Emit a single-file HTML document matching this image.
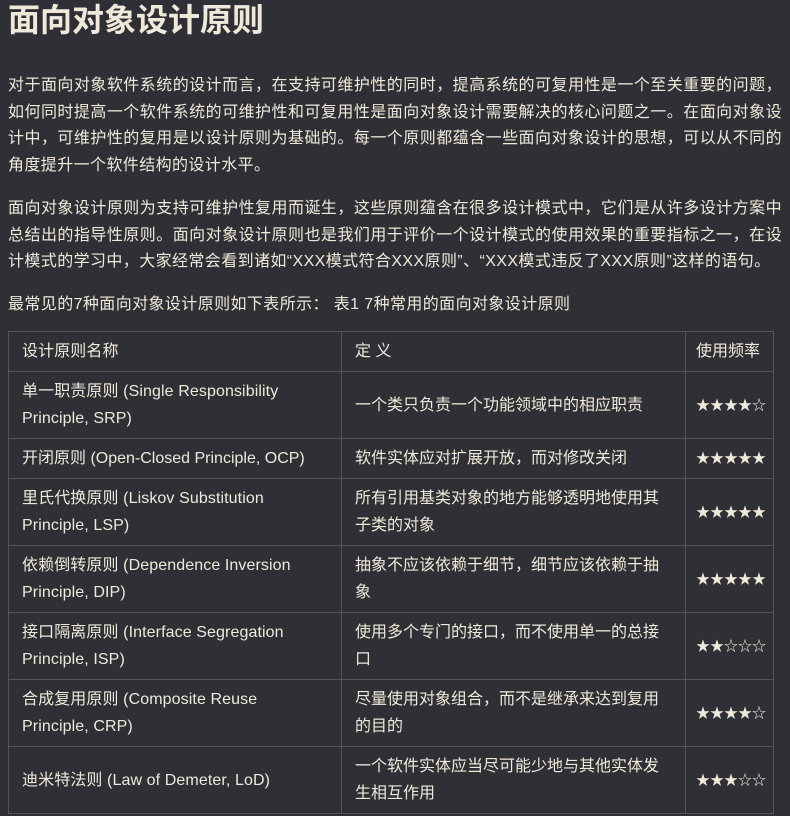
<!DOCTYPE html>
<html><head><meta charset="utf-8"><style>
html,body{margin:0;background:#2f3035;}
body{width:790px;height:816px;overflow:hidden;color:#efe9d9;font-family:"Liberation Sans","Noto Sans CJK SC",sans-serif;padding:0 8px;box-sizing:border-box;}
h1{font-size:32px;font-weight:bold;margin:0;padding-top:1px;line-height:38px;}
p{font-size:16px;line-height:26.5px;margin:0;text-align:justify;letter-spacing:0.4px;}
.p1{margin-top:34px;}
.p2{margin-top:17px;}
.p3{margin-top:16px;}
table{border-collapse:collapse;margin-top:13px;width:765px;font-size:16px;table-layout:fixed;}
td{border:1px solid #555;padding:0 13px;line-height:27px;vertical-align:middle;overflow:hidden;}
td.a{padding-right:40px;letter-spacing:0.1px;}
td.nw{padding-right:5px;white-space:nowrap;letter-spacing:0;}
tr.h td{height:39px;}
tr.s td{height:39px;}
tr.d td{height:66px;}
col.c1{width:333px;}col.c2{width:344px;}col.c3{width:88px;}
td.st{padding:0 10px;white-space:nowrap;font-size:14px;}
tr.h td.st{font-size:16px;}
</style></head><body>
<h1>面向对象设计原则</h1>
<p class="p1">对于面向对象软件系统的设计而言，在支持可维护性的同时，提高系统的可复用性是一个至关重要的问题，如何同时提高一个软件系统的可维护性和可复用性是面向对象设计需要解决的核心问题之一。在面向对象设计中，可维护性的复用是以设计原则为基础的。每一个原则都蕴含一些面向对象设计的思想，可以从不同的角度提升一个软件结构的设计水平。</p>
<p class="p2">面向对象设计原则为支持可维护性复用而诞生，这些原则蕴含在很多设计模式中，它们是从许多设计方案中总结出的指导性原则。面向对象设计原则也是我们用于评价一个设计模式的使用效果的重要指标之一，在设计模式的学习中，大家经常会看到诸如“XXX模式符合XXX原则”、“XXX模式违反了XXX原则”这样的语句。</p>
<p class="p3">最常见的7种面向对象设计原则如下表所示： 表1 7种常用的面向对象设计原则</p>
<table>
<colgroup><col class="c1"><col class="c2"><col class="c3"></colgroup>
<tr class="h"><td class="a">设计原则名称</td><td>定 义</td><td class="st">使用频率</td></tr>
<tr class="d"><td class="a">单一职责原则 (Single Responsibility Principle, SRP)</td><td>一个类只负责一个功能领域中的相应职责</td><td class="st">★★★★☆</td></tr>
<tr class="s"><td class="nw">开闭原则 (Open-Closed Principle, OCP)</td><td>软件实体应对扩展开放，而对修改关闭</td><td class="st">★★★★★</td></tr>
<tr class="d"><td class="a">里氏代换原则 (Liskov Substitution Principle, LSP)</td><td>所有引用基类对象的地方能够透明地使用其子类的对象</td><td class="st">★★★★★</td></tr>
<tr class="d"><td class="a">依赖倒转原则 (Dependence Inversion Principle, DIP)</td><td>抽象不应该依赖于细节，细节应该依赖于抽象</td><td class="st">★★★★★</td></tr>
<tr class="d"><td class="a">接口隔离原则 (Interface Segregation Principle, ISP)</td><td>使用多个专门的接口，而不使用单一的总接口</td><td class="st">★★☆☆☆</td></tr>
<tr class="d"><td class="a">合成复用原则 (Composite Reuse Principle, CRP)</td><td>尽量使用对象组合，而不是继承来达到复用的目的</td><td class="st">★★★★☆</td></tr>
<tr class="d"><td class="a">迪米特法则 (Law of Demeter, LoD)</td><td>一个软件实体应当尽可能少地与其他实体发生相互作用</td><td class="st">★★★☆☆</td></tr>
</table>
</body></html>
